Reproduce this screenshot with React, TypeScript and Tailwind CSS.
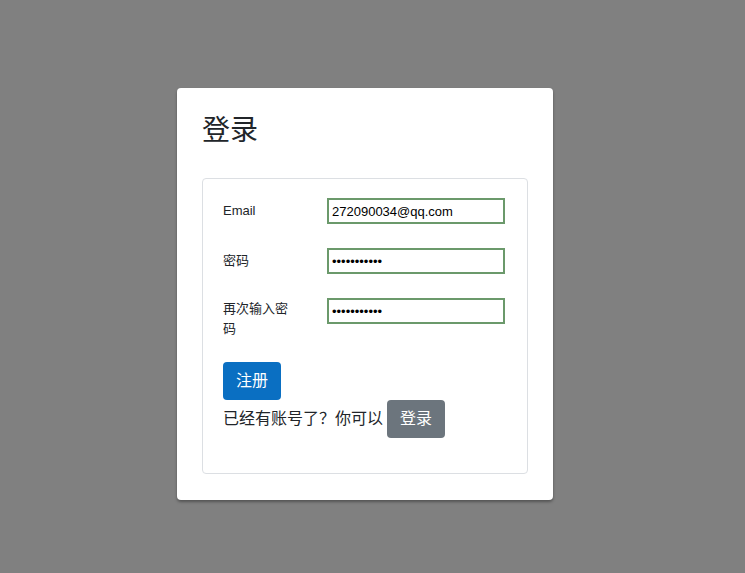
import { useState } from "react";

const font = { fontFamily: '"Liberation Sans", Arial, "Noto Sans CJK SC", sans-serif' };

export default function App() {
  const [email, setEmail] = useState("272090034@qq.com");
  const [password, setPassword] = useState("12345678901");
  const [password2, setPassword2] = useState("12345678901");

  return (
    <div className="min-h-screen bg-[#808080] pt-[88px] pl-[177px]" style={font}>
      <div className="w-[376px] h-[412px] bg-white rounded-[4px] shadow-[0_2px_3px_rgba(0,0,0,0.35)] pt-6 px-[25px] pb-[26px]">
        <h3 className="text-[28px] leading-[38px] text-[#212529] font-normal mt-0">登录</h3>

        {/* 폼 영역 */}
        <div className="mt-7 h-[296px] border border-[#dcdfe3] rounded-[4px] pt-[19px] px-5 text-[#212529]">
          <div className="flex items-start mb-6">
            <label className="w-[104px] text-[13px] leading-[19.5px] pt-[3px]">Email</label>
            <input
              title="email"
              className="w-[178px] h-[26px] border-2 border-[#6b996b] px-[3px] text-[13px] text-black outline-none"
              value={email}
              onChange={(e) => setEmail(e.target.value)}
            />
          </div>
          <div className="flex items-start mb-6">
            <label className="w-[104px] text-[13px] leading-[19.5px] pt-[3px]">密码</label>
            <input
              title="password"
              type="password"
              className="w-[178px] h-[26px] border-2 border-[#6b996b] px-[3px] text-[13px] text-black outline-none"
              value={password}
              onChange={(e) => setPassword(e.target.value)}
            />
          </div>
          <div className="flex items-start mb-6">
            <label className="w-[104px] pr-[34px] text-[13px] leading-[19.5px] pt-[1px]">再次输入密码</label>
            <input
              title="password2"
              type="password"
              className="w-[178px] h-[26px] border-2 border-[#6b996b] px-[3px] text-[13px] text-black outline-none"
              value={password2}
              onChange={(e) => setPassword2(e.target.value)}
            />
          </div>

          <button className="block h-[38px] px-[13px] rounded-[4px] bg-[#0a6fc2] text-white text-base leading-6">
            注册
          </button>
          <div className="text-base leading-6 flex items-center">
            <span>已经有账号了？你可以</span>
            <button className="ml-1 h-[38px] px-[13px] rounded-[4px] bg-[#6c757d] text-white text-base leading-6">
              登录
            </button>
          </div>
        </div>
      </div>
    </div>
  );
}
